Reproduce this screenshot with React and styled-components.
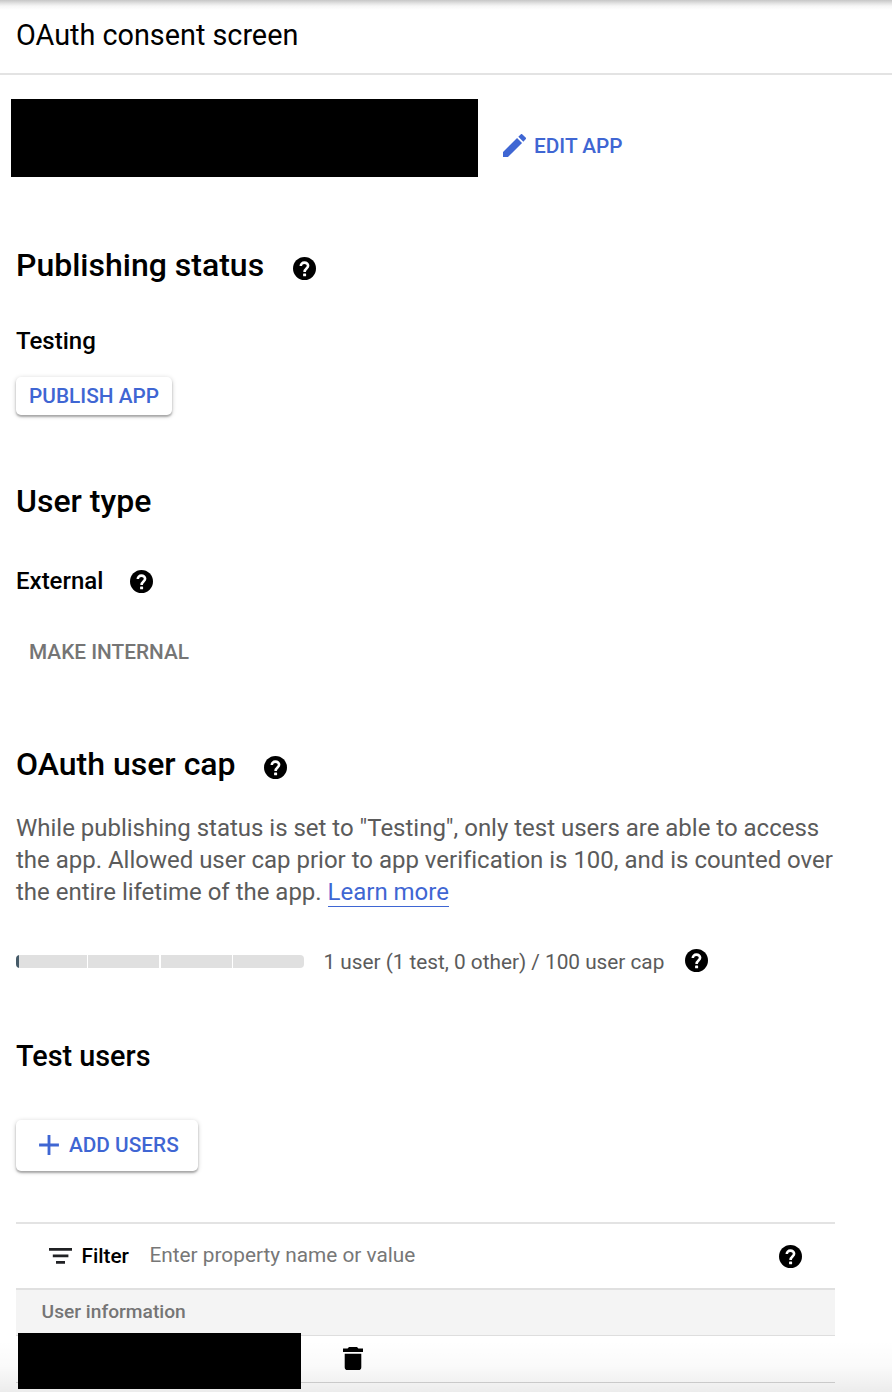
import React from "react";
import styled, { createGlobalStyle } from "styled-components";
import { MdAdd } from "react-icons/md";

const GlobalStyle = createGlobalStyle`
  *, *::before, *::after { box-sizing: border-box; }
  body {
    margin: 0;
    background: #fff;
    color: #000;
    font-family: Roboto, "Liberation Sans", sans-serif;
  }
  h1, h2, h3, p { margin: 0; }
`;

const Page = styled.main`
  position: relative;
  height: 1392px;
  overflow: hidden;
  display: flex;
  flex-direction: column;
`;

const Header = styled.header`
  height: 75px;
  padding: 18px 16px 0;
  border-bottom: 2px solid #e3e3e3;
  background: linear-gradient(#c6c6c6, #e0e0e0 3px, #f6f6f6 6px, #fff 10px);
`;

const Title = styled.h1`
  font-size: 28.8px;
  font-weight: 400;
  line-height: 34px;
  white-space: nowrap;
`;

const AppRow = styled.div`
  display: flex;
  align-items: flex-start;
  gap: 25px;
  height: 78px;
  margin: 24px 0 0 11px;
`;

const Redacted = styled.div`
  width: ${(p) => p.$width}px;
  height: ${(p) => p.$height}px;
  background: #000;
  flex: none;
`;

const Button = styled.button`
  display: inline-flex;
  align-items: center;
  align-self: flex-start;
  height: 38px;
  margin-top: ${(p) => p.$top || 0}px;
  padding: 0 13px;
  border: 0;
  border-radius: 5px;
  background: ${(p) => (p.$raised ? "#fff" : "transparent")};
  box-shadow: ${(p) =>
    p.$raised
      ? "0 2px 2px rgba(0,0,0,.26), 0 1px 5px rgba(0,0,0,.2)"
      : "none"};
  color: ${(p) => (p.$muted ? "#757575" : "#3f66d3")};
  font: 500 20.8px/24px Roboto, "Liberation Sans", sans-serif;
  white-space: nowrap;
  svg { flex: none; }
`;

const EditButton = styled(Button)`
  gap: 8px;
  padding: 0;
`;

const AddButton = styled(Button)`
  height: 51px;
  gap: 3px;
  padding: 0 19px 1px 16px;
`;

const EditSvg = styled.svg`
  width: 23px;
  height: 23px;
  margin-bottom: 1px;
`;

function EditIcon() {
  return (
    <EditSvg viewBox="3 3 18 18" fill="currentColor" aria-hidden="true">
      <path d="M3 17.1V21h3.9L17.9 10 14 6.1zM20.7 7.2a1 1 0 0 0 0-1.4L18.2 3.3a1 1 0 0 0-1.4 0L15 5.1 18.9 9z" />
    </EditSvg>
  );
}

const Section = styled.section`
  display: flex;
  flex-direction: column;
  padding: ${(p) => p.$top || 0}px 16px 0;
  height: ${(p) => p.$height}px;
`;

const HeadingRow = styled.div`
  display: flex;
  align-items: center;
  height: 38px;
  gap: 28.5px;
`;

const Heading = styled.h2`
  font-size: ${(p) => (p.$small ? 28.8 : 32)}px;
  font-weight: 500;
  line-height: 38px;
  white-space: nowrap;
`;

const HelpSvg = styled.svg`
  width: 23px;
  height: 23px;
  flex: none;
  margin-top: ${(p) => p.$drop || 0}px;
`;

function Help({ drop }) {
  return (
    <HelpSvg viewBox="0 0 23 23" $drop={drop} aria-label="Help">
      <circle cx="11.5" cy="11.5" r="11.5" fill="#000" />
      <path
        d="M7.8 9.1C7.8 7 9.3 5.6 11.4 5.6S15.1 7 15.1 8.8C15.1 11.5 11.6 11.6 11.6 14.9"
        fill="none"
        stroke="#fff"
        strokeWidth="2.6"
      />
      <rect x="10.1" y="16.4" width="3" height="2.9" rx=".6" fill="#fff" />
    </HelpSvg>
  );
}

const StatusRow = styled.div`
  display: flex;
  align-items: center;
  height: 30px;
  margin-top: ${(p) => p.$top}px;
  gap: 27px;
`;

const Status = styled.h3`
  font-size: 24px;
  font-weight: 500;
  line-height: 30px;
`;

const Description = styled.p`
  margin-top: 29px;
  color: #5b5b5b;
  font-size: 24px;
  line-height: 32px;
`;

const Line = styled.span`
  display: block;
  white-space: nowrap;
  letter-spacing: -0.01px;
`;

const Link = styled.a`
  display: inline-block;
  height: 31px;
  color: #3f66d3;
  border-bottom: 1px solid #3f66d3;
`;

const CapRow = styled.div`
  display: flex;
  align-items: flex-start;
  height: 28px;
  margin-top: 38px;
  padding-top: 3px;
`;

const Meter = styled.div`
  display: flex;
  justify-content: space-between;
  width: 288px;
  height: 13px;
  margin-top: 6px;
  border-radius: 4px;
  overflow: hidden;
`;

const MeterHalf = styled.div`
  display: flex;
  gap: 1px;
  width: 143px;
`;

const MeterPart = styled.span`
  flex: 1;
  background: ${(p) =>
    p.$used ? `linear-gradient(90deg, #455a68 ${p.$used}px, #e0e0e0 ${p.$used}px)` : "#e0e0e0"};
`;

const CapText = styled.span`
  width: 361px;
  padding-left: 19.5px;
  margin-right: 20px;
  color: #5b5b5b;
  font-size: 20.8px;
  line-height: 26px;
  letter-spacing: -0.02px;
  white-space: nowrap;
`;

const Table = styled.section`
  width: 819px;
  margin-left: 16px;
  border-top: 2px solid #e3e3e3;
`;

const FilterRow = styled.div`
  display: flex;
  align-items: center;
  height: 64px;
  padding: 0 33px;
`;

const FilterSvg = styled.svg`
  width: 23px;
  height: 16px;
  flex: none;
`;

function FilterIcon() {
  return (
    <FilterSvg viewBox="0 0 23 16" aria-hidden="true">
      <path d="M0 0h23v2.8H0zM3.8 6.4h15.6v2.8H3.8zM7 13h9v2.8H7z" fill="#202124" />
    </FilterSvg>
  );
}

const FilterLabel = styled.span`
  margin-left: 9.5px;
  font-size: 20.8px;
  font-weight: 500;
  line-height: 26px;
`;

const Placeholder = styled.span`
  flex: 1;
  margin-left: 20.5px;
  padding-bottom: 2px;
  color: #777;
  font-size: 20.8px;
  line-height: 26px;
`;

const ColumnHead = styled.div`
  height: 48px;
  padding: 11px 25.6px 0;
  border-top: 2px solid #e0e0e0;
  border-bottom: 1px solid #dedede;
  background: #f4f4f4;
  color: #757575;
  font-size: 19.2px;
  font-weight: 500;
  line-height: 22px;
`;

const UserRow = styled.div`
  display: flex;
  align-items: flex-start;
  height: 47px;
  padding-left: 2px;
  border-bottom: 1px solid #d5d5d5;
`;

const UserRedacted = styled(Redacted)`
  margin-top: -3px;
  z-index: 2;
`;

const DeleteSvg = styled.svg`
  width: 20px;
  height: 23px;
  margin: 11px 0 0 42px;
`;

function DeleteIcon() {
  return (
    <DeleteSvg viewBox="0 0 20 23" aria-label="Delete">
      <path d="M6 0h8l1.4 1.4H20V5H0V1.4h4.6zM1.7 6.8h16.6v13.4q0 2.8-2.8 2.8h-11q-2.8 0-2.8-2.8z" />
    </DeleteSvg>
  );
}

const BottomFade = styled.div`
  position: absolute;
  left: 0;
  right: 0;
  bottom: 0;
  height: 52px;
  background: linear-gradient(rgba(0,0,0,0), rgba(0,0,0,.02) 50%, rgba(0,0,0,.075));
`;

export default function App() {
  return (
    <Page>
      <GlobalStyle />
      <Header>
        <Title>OAuth consent screen</Title>
      </Header>
      <AppRow>
        <Redacted $width={467} $height={78} />
        <EditButton $top={28}>
          <EditIcon />
          EDIT APP
        </EditButton>
      </AppRow>

      <Section $top={69} $height={305}>
        <HeadingRow>
          <Heading>Publishing status</Heading>
          <Help drop={7} />
        </HeadingRow>
        <StatusRow $top={42}>
          <Status>Testing</Status>
        </StatusRow>
        <Button $raised $top={21}>PUBLISH APP</Button>
      </Section>

      <Section $height={263}>
        <HeadingRow>
          <Heading>User type</Heading>
        </HeadingRow>
        <StatusRow $top={46}>
          <Status>External</Status>
          <Help drop={1} />
        </StatusRow>
        <Button $muted $top={37}>MAKE INTERNAL</Button>
      </Section>

      <Section $height={292}>
        <HeadingRow>
          <Heading>OAuth user cap</Heading>
          <Help drop={7} />
        </HeadingRow>
        <Description>
          <Line>While publishing status is set to "Testing", only test users are able to access</Line>
          <Line>the app. Allowed user cap prior to app verification is 100, and is counted over</Line>
          <Line>the entire lifetime of the app. <Link>Learn more</Link></Line>
        </Description>
        <CapRow>
          <Meter>
            <MeterHalf>
              <MeterPart $used={3} />
              <MeterPart />
            </MeterHalf>
            <MeterHalf>
              <MeterPart />
              <MeterPart />
            </MeterHalf>
          </Meter>
          <CapText>1 user (1 test, 0 other) / 100 user cap</CapText>
          <Help />
        </CapRow>
      </Section>

      <Section $height={185}>
        <HeadingRow>
          <Heading $small>Test users</Heading>
        </HeadingRow>
        <AddButton $raised $top={45}>
          <MdAdd size={34} />
          ADD USERS
        </AddButton>
      </Section>

      <Table>
        <FilterRow>
          <FilterIcon />
          <FilterLabel>Filter</FilterLabel>
          <Placeholder>Enter property name or value</Placeholder>
          <Help drop={1} />
        </FilterRow>
        <ColumnHead>User information</ColumnHead>
        <UserRow>
          <UserRedacted $width={283} $height={56} />
          <DeleteIcon />
        </UserRow>
      </Table>
      <BottomFade />
    </Page>
  );
}
